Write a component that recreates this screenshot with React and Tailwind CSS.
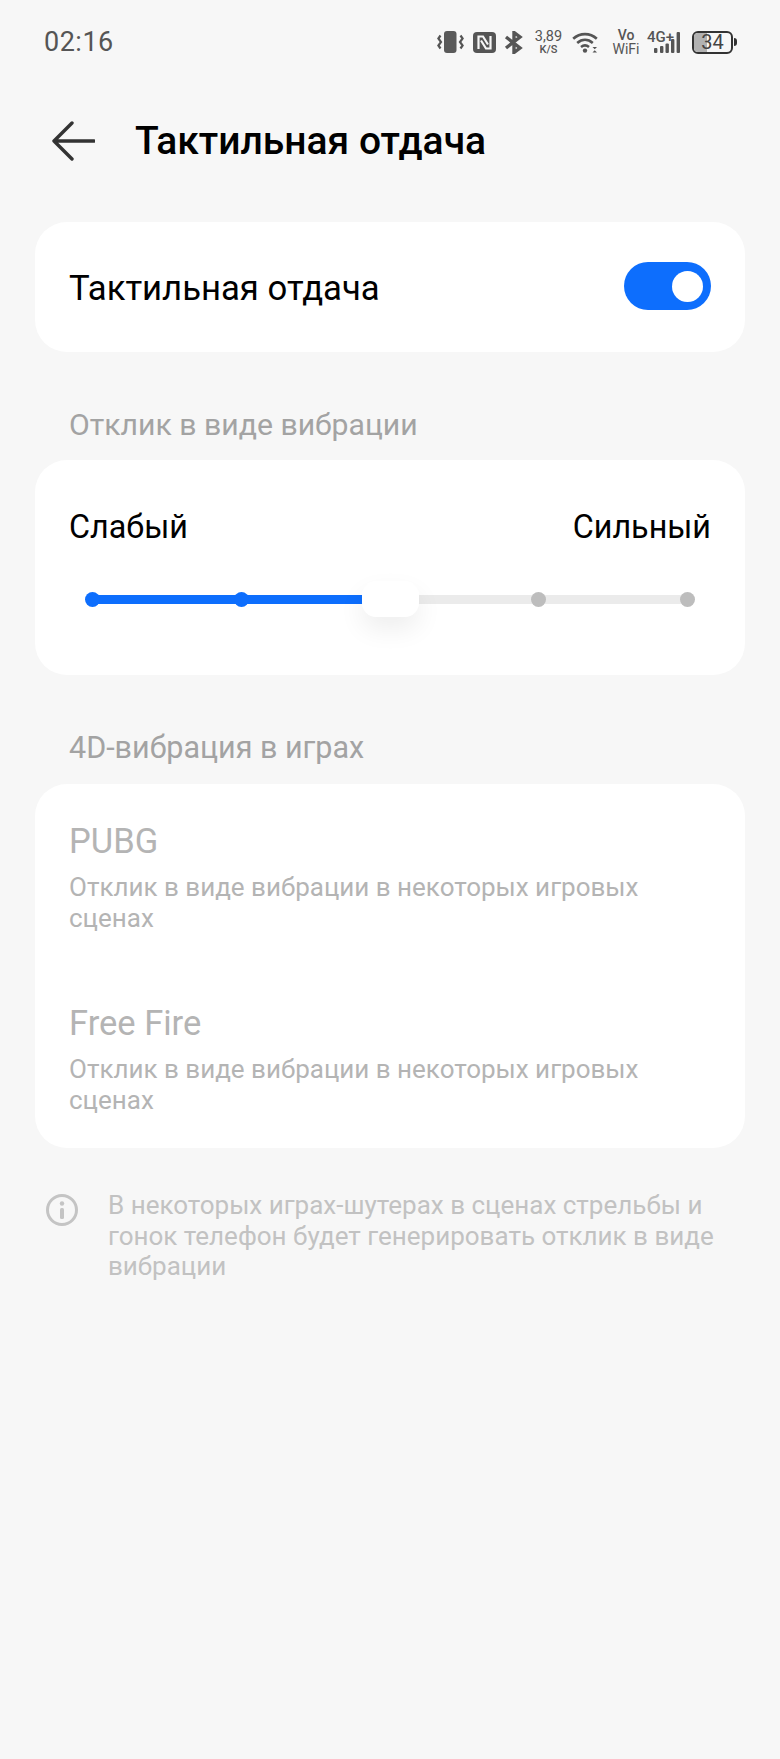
function VibrateIcon() {
  return (
    <svg width="27" height="22" viewBox="0 0 27 22" fill="none">
      <rect x="7" y="0" width="12.5" height="22" rx="3" fill="#5a5a5a" />
      <path d="M3.5 4.5 L1.4 7.5 L4 11 L1.4 14.5 L3.5 17.5" stroke="#555" strokeWidth="2.2" fill="none" />
      <path d="M23.5 4.5 L25.6 7.5 L23 11 L25.6 14.5 L23.5 17.5" stroke="#555" strokeWidth="2.2" fill="none" />
    </svg>
  );
}

function NfcIcon() {
  return (
    <svg width="23" height="21" viewBox="0 0 23 21">
      <rect width="23" height="21" rx="4" fill="#555" />
      <path d="M5.5 17 V4.5 H10 L15 12.5 M17.5 4 V16.5 H13 L8 8.5" stroke="#f7f7f7" strokeWidth="2.2" fill="none" />
    </svg>
  );
}

function BluetoothIcon() {
  return (
    <svg width="20" height="23" viewBox="0 0 20 23" fill="none">
      <path d="M2 6 L16 17 L10 21.5 V1.5 L16 6 L2 17" stroke="#555" strokeWidth="3.4" />
    </svg>
  );
}

function WifiIcon() {
  return (
    <svg width="26" height="21" viewBox="0 0 26 21" fill="none">
      <path d="M1.2 6.8 C8 0.6 18 0.6 24.8 6.8" stroke="#555" strokeWidth="2.6" />
      <path d="M5.2 11 C10 6.8 16 6.8 20.8 11" stroke="#555" strokeWidth="2.6" />
      <path d="M9 15 C11.5 13 14.5 13 17 15" stroke="#555" strokeWidth="2.6" />
      <circle cx="13" cy="18.6" r="2.2" fill="#555" />
      <path d="M20.5 15 H25 L22.7 17.2 Z" fill="#555" />
      <path d="M20.5 20.5 H25 L22.7 18.2 Z" fill="#555" />
    </svg>
  );
}

function SignalBars() {
  return (
    <svg width="26" height="21" viewBox="0 0 26 21" fill="#555">
      <rect x="0" y="16" width="3.4" height="5" rx="1" />
      <rect x="6" y="14" width="3.4" height="7" rx="1" />
      <rect x="11.5" y="11.5" width="3.4" height="9.5" rx="1" />
      <rect x="17" y="7" width="3.4" height="14" rx="1" />
      <rect x="22.6" y="0" width="3.4" height="21" rx="1" />
    </svg>
  );
}

function BackArrow() {
  return (
    <svg width="44" height="40" viewBox="0 0 44 40" fill="none" className="shrink-0">
      <path d="M43 20 H3 M21 2 L3 20 L21 38" stroke="#333" strokeWidth="3.4" strokeLinecap="round" strokeLinejoin="round" />
    </svg>
  );
}

function Battery() {
  return (
    <div className="flex items-center">
      <div className="relative w-[41px] h-[23px] rounded-[6px] border-2 border-[#333] overflow-hidden flex items-center justify-center">
        <div className="absolute left-0 top-0 bottom-0 w-[13px] bg-[#b2b2b2]" />
        <span className="relative text-[20px] leading-none text-[#444]">34</span>
      </div>
      <div className="w-[3px] h-[8px] ml-[1px] bg-[#333] rounded-r-sm" />
    </div>
  );
}

function StatusBar() {
  return (
    <div className="h-[84px] pl-[44px] pr-[43px] flex items-center justify-between text-[#555]">
      <span className="text-[27px] tracking-[0.5px]">02:16</span>
      <div className="flex items-center">
        <VibrateIcon />
        <div className="ml-[9px]"><NfcIcon /></div>
        <div className="ml-[8px]"><BluetoothIcon /></div>
        <div className="ml-[11px] w-[27px] flex flex-col items-center">
          <span className="text-[14.5px] leading-[14px]">3,89</span>
          <span className="text-[11px] leading-[11px] font-medium">K/S</span>
        </div>
        <div className="ml-[10px]"><WifiIcon /></div>
        <div className="ml-[15px] w-[26px] flex flex-col items-center">
          <span className="text-[14px] leading-[14px] font-medium">Vo</span>
          <span className="text-[14px] leading-[14px]">WiFi</span>
        </div>
        <div className="ml-[8px] w-[33px] relative h-[22px]">
          <div className="absolute right-0 bottom-0"><SignalBars /></div>
          <span className="absolute left-0 top-[-1px] text-[15px] leading-[14px] font-medium">4G+</span>
        </div>
        <div className="ml-[12px]"><Battery /></div>
      </div>
    </div>
  );
}

function Toggle() {
  return (
    <div className="w-[87px] h-[48px] rounded-full bg-[#0d6efd] flex items-center justify-end pr-[8px] -translate-y-[1px]">
      <div className="w-[31px] h-[31px] rounded-full bg-white" />
    </div>
  );
}

function Slider() {
  return (
    <div className="relative mt-[34px] ml-[16px] mr-[16px] flex items-center justify-between h-[36px]">
      <div className="absolute left-[7px] right-[7px] top-[14px] h-[9px] bg-[#ebebeb]" />
      <div className="absolute left-[7px] w-[290px] top-[14px] h-[9px] bg-[#0d6efd]" />
      <div className="relative w-[15px] h-[15px] rounded-full bg-[#0d6efd]" />
      <div className="relative w-[15px] h-[15px] rounded-full bg-[#0d6efd]" />
      <div className="relative w-[15px] h-[36px] flex justify-center">
        <div className="shrink-0 w-[57px] h-[36px] rounded-[14px] bg-white shadow-[0_12px_26px_rgba(0,0,0,0.07)]" />
      </div>
      <div className="relative w-[15px] h-[15px] rounded-full bg-[#bdbdbd]" />
      <div className="relative w-[15px] h-[15px] rounded-full bg-[#bdbdbd]" />
    </div>
  );
}

function GameRow({ name, className }) {
  return (
    <div className={className}>
      <div className="text-[34.5px] leading-[40px] text-[#b4b4b4]">{name}</div>
      <div className="mt-[11px] text-[26px] leading-[30.5px] text-[#b4b4b4]">
        Отклик в виде вибрации в некоторых игровых сценах
      </div>
    </div>
  );
}

export default function App() {
  return (
    <div className="w-[780px] h-[1759px] bg-[#f7f7f7] overflow-hidden font-['Roboto',sans-serif]">
      <StatusBar />

      <div className="h-[108px] flex items-center pl-[51px] pt-[6px]">
        <BackArrow />
        <h1 className="ml-[40px] text-[39px] font-medium text-black">Тактильная отдача</h1>
      </div>

      <div className="mx-[35px] mt-[30px]">
        <div className="h-[130px] rounded-[32px] bg-white px-[34px] flex items-center justify-between">
          <span className="text-[34.7px] text-black translate-y-[1px]">Тактильная отдача</span>
          <Toggle />
        </div>

        <div className="mt-[56px] px-[34px] text-[30.2px] leading-[34px] text-[#a3a3a3]">Отклик в виде вибрации</div>
        <div className="mt-[18px] h-[215px] rounded-[32px] bg-white px-[34px] pt-[47px]">
          <div className="flex justify-between text-[32.3px] leading-[40px] text-black">
            <span>Слабый</span>
            <span>Сильный</span>
          </div>
          <Slider />
        </div>

        <div className="mt-[56px] px-[34px] text-[30.5px] leading-[34px] text-[#a3a3a3]">4D-вибрация в играх</div>
        <div className="mt-[19px] h-[364px] rounded-[32px] bg-white px-[34px] pt-[37px]">
          <GameRow name="PUBG" />
          <GameRow name="Free Fire" className="mt-[70px]" />
        </div>

        <div className="mt-[42px] flex items-start">
          <svg width="34" height="34" viewBox="0 0 34 34" fill="none" className="ml-[10px] mt-[3px] shrink-0">
            <circle cx="17" cy="17" r="14.5" stroke="#c4c4c4" strokeWidth="3" />
            <circle cx="17" cy="10.5" r="2.2" fill="#c4c4c4" />
            <rect x="15" y="15" width="4" height="11" rx="1.5" fill="#c4c4c4" />
          </svg>
          <p className="ml-[29px] w-[632px] text-[26px] leading-[30.5px] text-[#c2c2c2]">
            В некоторых играх-шутерах в сценах стрельбы и гонок телефон будет генерировать отклик в виде вибрации
          </p>
        </div>
      </div>
    </div>
  );
}
